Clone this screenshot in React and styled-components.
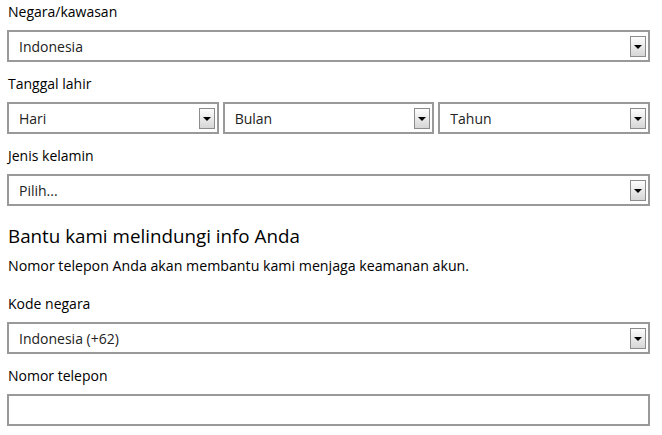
import styled, { createGlobalStyle } from "styled-components";

const Global = createGlobalStyle`
  body {
    margin: 0;
    background: #fff;
    font-family: "Open Sans", "Noto Sans", sans-serif;
    color: #000;
  }
`;

const Page = styled.div`
  width: 643px;
  padding: 2px 0 0 7px;
`;

const Field = styled.div`
  margin-bottom: ${(p) => p.$gap || 12}px;
`;

const Label = styled.div`
  font-size: 14px;
  line-height: 20px;
  padding-left: 1px;
  margin-bottom: 8px;
`;

const Row = styled.div`
  display: flex;
  gap: 4px;
`;

const Box = styled.div`
  flex: 1;
  box-sizing: border-box;
  height: 32px;
  border: 2px solid #999;
  background: #fff;
  display: flex;
  align-items: center;
  justify-content: space-between;
  padding: 0 2px 0 10px;
  font-size: 14px;
  color: #222;
`;

const Arrow = styled.span`
  box-sizing: border-box;
  width: 16px;
  height: 21px;
  border: 1px solid #8c8c8c;
  background: linear-gradient(#fdfdfd, #d6d6d6);
  display: flex;
  align-items: center;
  justify-content: center;
  padding-top: 2px;

  &::after {
    content: "";
    border-left: 4px solid transparent;
    border-right: 4px solid transparent;
    border-top: 4px solid #000;
  }
`;

const Heading = styled.h2`
  margin: 0 0 6px;
  padding-left: 1px;
  font-size: 18.8px;
  line-height: 28px;
  font-weight: 400;
`;

const Para = styled.p`
  margin: 0 0 18px;
  padding-left: 1px;
  font-size: 14.2px;
  line-height: 20px;
`;

const Select = ({ value }) => (
  <Box>
    <span>{value}</span>
    <Arrow />
  </Box>
);

export default function App() {
  return (
    <>
      <Global />
      <Page>
        <Field>
          <Label>Negara/kawasan</Label>
          <Select value="Indonesia" />
        </Field>
        <Field>
          <Label>Tanggal lahir</Label>
          <Row>
            <Select value="Hari" />
            <Select value="Bulan" />
            <Select value="Tahun" />
          </Row>
        </Field>
        <Field $gap={16}>
          <Label>Jenis kelamin</Label>
          <Select value="Pilih..." />
        </Field>
        <Heading>Bantu kami melindungi info Anda</Heading>
        <Para>Nomor telepon Anda akan membantu kami menjaga keamanan akun.</Para>
        <Field>
          <Label>Kode negara</Label>
          <Select value="Indonesia (+62)" />
        </Field>
        <Field>
          <Label>Nomor telepon</Label>
          <Box />
        </Field>
      </Page>
    </>
  );
}
